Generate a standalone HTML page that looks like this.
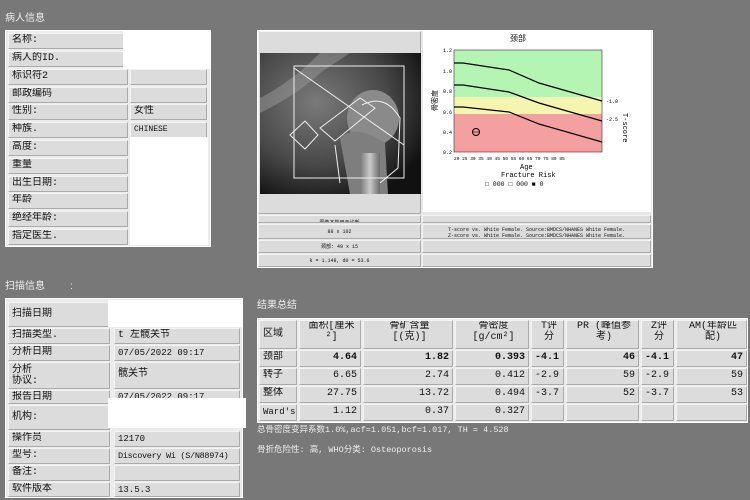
<!DOCTYPE html>
<html><head><meta charset="utf-8">
<style>
*{margin:0;padding:0;box-sizing:border-box}
body{width:750px;height:500px;background:#787878;position:relative;overflow:hidden;font-family:"Liberation Mono","Noto Sans CJK SC",monospace;color:#111}
.a{position:absolute}
.t{color:#eee;font-size:10px;font-family:"Liberation Sans","Noto Sans CJK SC",sans-serif}
.panel{position:absolute;background:#ececec;border:1px solid #fff}
.c{position:absolute;background:#dcdcdc;border:1px solid #f4f4f4;border-right-color:#aaa;border-bottom-color:#aaa;font-size:10px;line-height:14px;padding-left:3px;white-space:nowrap;overflow:hidden}
.w{position:absolute;background:#fff}
.r{text-align:right;padding-right:3px}
.s{font-size:5px;text-align:center;padding:0}
</style></head><body>
<div class="a t" style="left:5px;top:9px">病人信息</div>

<div class="panel" style="left:5px;top:30px;width:206px;height:217px"></div>
<div class="c" style="left:8px;top:33px;width:120px;height:16px">名称:</div>
<div class="c" style="left:8px;top:51px;width:120px;height:16px">病人的ID.</div>
<div class="c" style="left:8px;top:69px;width:120px;height:16px">标识符2</div>
<div class="c" style="left:8px;top:87px;width:120px;height:16px">邮政编码</div>
<div class="c" style="left:8px;top:104px;width:120px;height:16px">性别:</div>
<div class="c" style="left:8px;top:122px;width:120px;height:16px">种族.</div>
<div class="c" style="left:8px;top:140px;width:120px;height:16px">高度:</div>
<div class="c" style="left:8px;top:158px;width:120px;height:16px">重量</div>
<div class="c" style="left:8px;top:176px;width:120px;height:16px">出生日期:</div>
<div class="c" style="left:8px;top:193px;width:120px;height:16px">年龄</div>
<div class="c" style="left:8px;top:211px;width:120px;height:16px">绝经年龄:</div>
<div class="c" style="left:8px;top:229px;width:120px;height:16px">指定医生.</div>
<div class="c" style="left:130px;top:69px;width:77px;height:16px"></div>
<div class="c" style="left:130px;top:87px;width:77px;height:16px"></div>
<div class="c" style="left:130px;top:104px;width:77px;height:16px">女性</div>
<div class="c" style="left:130px;top:122px;width:77px;height:16px;font-size:8px">CHINESE</div>
<div class="w" style="left:130px;top:137px;width:78px;height:108px"></div>
<div class="w" style="left:123px;top:30px;width:88px;height:39px"></div>

<!-- image panel -->
<div class="panel" style="left:257px;top:30px;width:396px;height:238px;background:#e8e8e8"></div>
<div class="c" style="left:258px;top:31px;width:163px;height:183px;padding:0"></div>
<svg class="a" style="left:260px;top:53px" width="161" height="141" viewBox="0 0 161 141">
<defs><radialGradient id="g1" cx="0.35" cy="0.35" r="0.75"><stop offset="0" stop-color="#7a7a7a"/><stop offset="0.6" stop-color="#474747"/><stop offset="1" stop-color="#111"/></radialGradient>
<linearGradient id="g2" x1="0" x2="1"><stop offset="0" stop-color="#777"/><stop offset="0.5" stop-color="#ddd"/><stop offset="1" stop-color="#666"/></linearGradient></defs>
<rect width="161" height="141" fill="url(#g1)"/>
<path d="M0 60 Q40 40 60 20 L90 0 L60 0 Q30 30 0 45Z" fill="#999" opacity=".5"/>
<ellipse cx="113" cy="65" rx="26" ry="28" fill="#8a8a8a"/>
<path d="M80 85 Q95 70 125 90 L128 141 L90 141Z" fill="#7e7e7e"/>
<rect x="100" y="100" width="20" height="41" fill="url(#g2)" opacity=".8"/>
<rect x="34" y="13" width="110" height="112" fill="none" stroke="#eee" stroke-width="1"/>
<path d="M34 15 L144 92 M60 75 L100 45 L115 55 L75 88Z M30 82 L45 68 L58 82 L45 96Z M102 52 Q125 40 140 65 L138 115 L120 130 M75 92 L80 130" fill="none" stroke="#eee" stroke-width="1"/>
</svg>
<div class="w" style="left:423px;top:31px;width:228px;height:181px"></div>
<div class="a" style="left:510px;top:33px;font-size:8px">颈部</div>
<svg class="a" style="left:423px;top:31px" width="228" height="181" viewBox="0 0 228 181" font-family="Liberation Mono" font-size="5">
<rect x="31" y="19" width="148" height="47" fill="#b4f5b4"/>
<rect x="31" y="66" width="148" height="17" fill="#f5f5b0"/>
<rect x="31" y="83" width="148" height="38" fill="#f5a0a0"/>
<rect x="31" y="19" width="148" height="102" fill="none" stroke="#333" stroke-width=".6"/>
<path d="M31 32 L40 32 L86 39 L116 52 L179 70" fill="none" stroke="#000" stroke-width="1.2"/>
<path d="M31 54 L40 54 L86 61 L116 72 L179 90" fill="none" stroke="#000" stroke-width="1.2"/>
<path d="M31 76 L40 76 L86 81 L116 93 L179 111" fill="none" stroke="#000" stroke-width="1.2"/>
<circle cx="53" cy="101" r="3.5" fill="none" stroke="#000"/><line x1="50" y1="101" x2="56" y2="101" stroke="#000" stroke-width=".6"/>
<text x="20" y="21">1.2</text><text x="20" y="42">1.0</text><text x="20" y="62">0.8</text><text x="20" y="83">0.6</text><text x="20" y="103">0.4</text><text x="20" y="123">0.2</text>
<text x="31" y="129" font-size="4.5">20 25 30 35 40 45 50 55 60 65 70 75 80 85</text>
<text x="183" y="72">-1.0</text><text x="183" y="90">-2.5</text>
<text x="97" y="138" font-size="7">Age</text>
<text x="78" y="146" font-size="7">Fracture Risk</text>
<text x="62" y="155" font-size="6.5">□ 000   □ 000   ■ 0</text>
<text x="0" y="0" font-size="7" transform="translate(14 80) rotate(-90)" font-family="Noto Sans CJK SC">骨密度</text>
<text x="0" y="0" font-size="7" transform="translate(200 82) rotate(90)">T-score</text>
</svg>
<div class="c s" style="left:258px;top:215px;width:163px;height:8px">图像不能用于诊断</div>
<div class="c s" style="left:422px;top:215px;width:229px;height:8px"></div>
<div class="c s" style="left:258px;top:224px;width:163px;height:15px;line-height:14px">88 x 102</div>
<div class="c s" style="left:422px;top:224px;width:229px;height:15px;line-height:6px;padding-top:2px">T-score vs. White Female. Source:BMDCS/NHANES White Female.<br>Z-score vs. White Female. Source:BMDCS/NHANES White Female.</div>
<div class="c s" style="left:258px;top:240px;width:163px;height:13px;line-height:12px">颈部: 49 x 15</div>
<div class="c s" style="left:422px;top:240px;width:229px;height:13px"></div>
<div class="c s" style="left:258px;top:254px;width:163px;height:13px;line-height:12px">k = 1.148, d0 = 53.6</div>
<div class="c s" style="left:422px;top:254px;width:229px;height:13px"></div>

<div class="a t" style="left:5px;top:277px">扫描信息&nbsp;&nbsp;&nbsp;&nbsp;&nbsp;&nbsp;&nbsp;&nbsp;&nbsp;:</div>
<div class="panel" style="left:5px;top:298px;width:238px;height:200px"></div>
<div class="c" style="left:8px;top:302px;width:102px;height:25px;line-height:23px">扫描日期</div>
<div class="c" style="left:8px;top:328px;width:102px;height:16px">扫描类型.</div>
<div class="c" style="left:8px;top:345px;width:102px;height:16px">分析日期</div>
<div class="c" style="left:8px;top:362px;width:102px;height:27px;line-height:11px;padding-top:2px">分析<br>协议:</div>
<div class="c" style="left:8px;top:390px;width:102px;height:14px;line-height:13px">报告日期</div>
<div class="c" style="left:8px;top:405px;width:102px;height:25px;line-height:23px">机构:</div>
<div class="c" style="left:8px;top:431px;width:102px;height:16px">操作员</div>
<div class="c" style="left:8px;top:448px;width:102px;height:16px">型号:</div>
<div class="c" style="left:8px;top:465px;width:102px;height:16px">备注:</div>
<div class="c" style="left:8px;top:482px;width:102px;height:15px">软件版本</div>
<div class="c" style="left:114px;top:328px;width:126px;height:16px">t 左髋关节</div>
<div class="c" style="left:114px;top:345px;width:126px;height:16px;font-size:9px">07/05/2022 09:17</div>
<div class="c" style="left:114px;top:362px;width:126px;height:27px;line-height:24px">髋关节</div>
<div class="c" style="left:114px;top:390px;width:126px;height:14px;font-size:9px;line-height:12px">07/05/2022 09:17</div>
<div class="c" style="left:114px;top:431px;width:126px;height:16px;font-size:9px">12170</div>
<div class="c" style="left:114px;top:448px;width:126px;height:16px;font-size:8.5px;letter-spacing:-0.3px">Discovery Wi (S/N88974)</div>
<div class="c" style="left:114px;top:465px;width:126px;height:16px"></div>
<div class="c" style="left:114px;top:482px;width:126px;height:15px;font-size:9px">13.5.3</div>
<div class="w" style="left:108px;top:300px;width:134px;height:27px"></div>
<div class="w" style="left:108px;top:398px;width:138px;height:30px"></div>

<div class="a t" style="left:257px;top:296px">结果总结</div>
<div class="panel" style="left:257px;top:318px;width:491px;height:105px"></div>
<div class="c" style="left:259px;top:320px;width:38px;height:29px;line-height:27px">区域</div>
<div class="c" style="left:299px;top:320px;width:62px;height:29px;line-height:11px;text-align:center">面积[厘米<br>²]</div>
<div class="c" style="left:363px;top:320px;width:90px;height:29px;line-height:11px;text-align:center">骨矿含量<br>[(克)]</div>
<div class="c" style="left:455px;top:320px;width:74px;height:29px;line-height:11px;text-align:center">骨密度<br>[g/cm²]</div>
<div class="c" style="left:531px;top:320px;width:33px;height:29px;line-height:11px;text-align:center">T评<br>分</div>
<div class="c" style="left:566px;top:320px;width:73px;height:29px;line-height:11px;text-align:center">PR (峰值参<br>考)</div>
<div class="c" style="left:641px;top:320px;width:33px;height:29px;line-height:11px;text-align:center">Z评<br>分</div>
<div class="c" style="left:676px;top:320px;width:71px;height:29px;line-height:11px;text-align:center">AM(年龄匹<br>配)</div>

<div class="c" style="left:259px;top:350px;width:38px;height:17px">颈部</div>
<div class="c r" style="left:299px;top:350px;width:62px;height:17px;font-weight:bold">4.64</div>
<div class="c r" style="left:363px;top:350px;width:90px;height:17px;font-weight:bold">1.82</div>
<div class="c r" style="left:455px;top:350px;width:74px;height:17px;font-weight:bold">0.393</div>
<div class="c" style="left:531px;top:350px;width:33px;height:17px;font-weight:bold">-4.1</div>
<div class="c r" style="left:566px;top:350px;width:73px;height:17px;font-weight:bold">46</div>
<div class="c" style="left:641px;top:350px;width:33px;height:17px;font-weight:bold">-4.1</div>
<div class="c r" style="left:676px;top:350px;width:71px;height:17px;font-weight:bold">47</div>

<div class="c" style="left:259px;top:368px;width:38px;height:17px">转子</div>
<div class="c r" style="left:299px;top:368px;width:62px;height:17px">6.65</div>
<div class="c r" style="left:363px;top:368px;width:90px;height:17px">2.74</div>
<div class="c r" style="left:455px;top:368px;width:74px;height:17px">0.412</div>
<div class="c" style="left:531px;top:368px;width:33px;height:17px">-2.9</div>
<div class="c r" style="left:566px;top:368px;width:73px;height:17px">59</div>
<div class="c" style="left:641px;top:368px;width:33px;height:17px">-2.9</div>
<div class="c r" style="left:676px;top:368px;width:71px;height:17px">59</div>

<div class="c" style="left:259px;top:386px;width:38px;height:17px">整体</div>
<div class="c r" style="left:299px;top:386px;width:62px;height:17px">27.75</div>
<div class="c r" style="left:363px;top:386px;width:90px;height:17px">13.72</div>
<div class="c r" style="left:455px;top:386px;width:74px;height:17px">0.494</div>
<div class="c" style="left:531px;top:386px;width:33px;height:17px">-3.7</div>
<div class="c r" style="left:566px;top:386px;width:73px;height:17px">52</div>
<div class="c" style="left:641px;top:386px;width:33px;height:17px">-3.7</div>
<div class="c r" style="left:676px;top:386px;width:71px;height:17px">53</div>

<div class="c" style="left:259px;top:404px;width:38px;height:17px;font-size:9px">Ward's</div>
<div class="c r" style="left:299px;top:404px;width:62px;height:17px">1.12</div>
<div class="c r" style="left:363px;top:404px;width:90px;height:17px">0.37</div>
<div class="c r" style="left:455px;top:404px;width:74px;height:17px">0.327</div>
<div class="c" style="left:531px;top:404px;width:33px;height:17px"></div>
<div class="c" style="left:566px;top:404px;width:73px;height:17px"></div>
<div class="c" style="left:641px;top:404px;width:33px;height:17px"></div>
<div class="c" style="left:676px;top:404px;width:71px;height:17px"></div>

<div class="a t" style="left:257px;top:423px;font-family:'Liberation Mono','Noto Sans CJK SC',monospace;font-size:8.5px">总骨密度变异系数1.0%,acf=1.051,bcf=1.017, TH = 4.528</div>
<div class="a t" style="left:257px;top:443px;font-family:'Liberation Mono','Noto Sans CJK SC',monospace;font-size:8.5px">骨折危险性:  高, WHO分类: Osteoporosis</div>
</body></html>
